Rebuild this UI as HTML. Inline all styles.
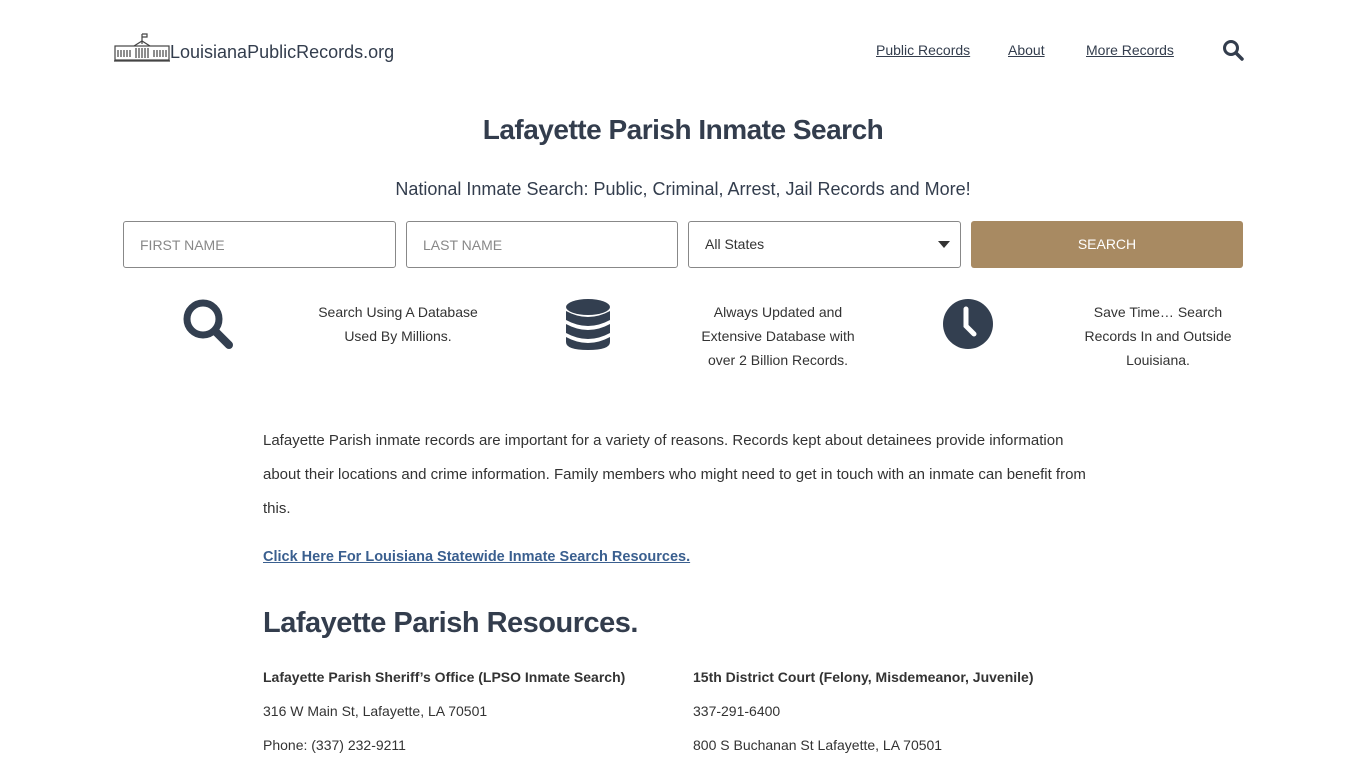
<!DOCTYPE html>
<html><head><meta charset="utf-8"><style>
body{margin:0;background:#fff;font-family:"Liberation Sans",sans-serif;color:#333;width:1366px;height:768px;overflow:hidden;position:relative}
.a{position:absolute}
.nav a{color:#333d4d;font-size:14px;text-decoration:underline}
input,.sel{position:absolute;top:221px;height:47px;border:1px solid #888;border-radius:3px;box-sizing:border-box;font-family:"Liberation Sans",sans-serif;font-size:14px;padding-left:16px;color:#888;line-height:45px}
.ft{font-size:14px;text-align:center;line-height:24px;color:#333}
p{margin:0}
</style></head><body>
<svg class="a" style="left:114px;top:32px" width="56" height="32" viewBox="0 0 56 32" fill="none" stroke="#444" stroke-width="1.2">
<line x1="28" y1="2" x2="28" y2="12"/><path d="M28 2h5v3h-5" />
<path d="M20 14 L28 9 L36 14"/>
<rect x="1" y="14" width="54" height="14"/>
<path d="M4 18v7M7 18v7M10 18v7M13 18v7M16 18v7M22 16v10M25 16v10M28 16v10M31 16v10M34 16v10M40 18v7M43 18v7M46 18v7M49 18v7M52 18v7"/>
<line x1="0" y1="29" x2="56" y2="29"/>
</svg>
<div class="a" style="left:170px;top:42px;font-size:18px;color:#333d4d">LouisianaPublicRecords.org</div>
<div class="a nav" style="left:876px;top:42px"><a>Public Records</a></div>
<div class="a nav" style="left:1008px;top:42px"><a>About</a></div>
<div class="a nav" style="left:1086px;top:42px"><a>More Records</a></div>
<svg class="a" style="left:1222px;top:39px" width="22" height="22" viewBox="0 0 22 22"><circle cx="9" cy="9" r="6.5" fill="none" stroke="#333d4d" stroke-width="3"/><line x1="14" y1="14" x2="20" y2="20" stroke="#333d4d" stroke-width="3.5" stroke-linecap="round"/></svg>
<div class="a" style="left:0;width:1366px;top:114px;text-align:center;font-size:28px;font-weight:bold;color:#333d4d;letter-spacing:-0.5px">Lafayette Parish Inmate Search</div>
<div class="a" style="left:0;width:1366px;top:179px;text-align:center;font-size:18px;color:#333d4d">National Inmate Search: Public, Criminal, Arrest, Jail Records and More!</div>
<input style="left:123px;width:273px" value="FIRST NAME">
<input style="left:406px;width:272px" value="LAST NAME">
<div class="sel" style="left:688px;width:273px;color:#333;padding-top:0">All States<span style="position:absolute;right:10px;top:19px;border:6px solid transparent;border-top:7px solid #333"></span></div>
<div class="a" style="left:971px;top:221px;width:272px;height:47px;background:#a88a62;border-radius:3px;color:#fff;font-size:14px;text-align:center;line-height:47px">SEARCH</div>
<svg class="a" style="left:182px;top:298px" width="52" height="52" viewBox="0 0 52 52"><circle cx="21" cy="21" r="16" fill="none" stroke="#333f50" stroke-width="7"/><line x1="33" y1="33" x2="47" y2="47" stroke="#333f50" stroke-width="8" stroke-linecap="round"/></svg>
<svg class="a" style="left:565px;top:299px" width="46" height="51" viewBox="0 0 46 51" fill="#333f50"><ellipse cx="23" cy="8" rx="22" ry="8"/><path d="M1 12q22 12 44 0v9q-22 12-44 0z"/><path d="M1 25q22 12 44 0v9q-22 12-44 0z"/><path d="M1 38q22 12 44 0v5q0 8-22 8t-22-8z"/></svg>
<svg class="a" style="left:943px;top:299px" width="50" height="50" viewBox="0 0 50 50"><circle cx="25" cy="25" r="25" fill="#333f50"/><path d="M23 10v17l8 8" stroke="#fff" stroke-width="5" fill="none" stroke-linecap="round"/></svg>
<div class="a ft" style="left:298px;width:200px;top:300px">Search Using A Database<br>Used By Millions.</div>
<div class="a ft" style="left:678px;width:200px;top:300px">Always Updated and<br>Extensive Database with<br>over 2 Billion Records.</div>
<div class="a ft" style="left:1058px;width:200px;top:300px">Save Time… Search<br>Records In and Outside<br>Louisiana.</div>
<div class="a" style="left:263px;top:424px;width:845px;font-size:15px;line-height:34px;color:#333">Lafayette Parish inmate records are important for a variety of reasons. Records kept about detainees provide information<br>about their locations and crime information. Family members who might need to get in touch with an inmate can benefit from<br>this.</div>
<div class="a" style="left:263px;top:549px;font-size:14.5px;font-weight:bold;color:#3a5f8f;text-decoration:underline">Click Here For Louisiana Statewide Inmate Search Resources.</div>
<div class="a" style="left:263px;top:607px;font-size:29px;font-weight:bold;letter-spacing:-0.5px;color:#333d4d">Lafayette Parish Resources.</div>
<div class="a" style="left:263px;top:660px;font-size:14px;line-height:34px;color:#333"><b>Lafayette Parish Sheriff’s Office (LPSO Inmate Search)</b><br>316 W Main St, Lafayette, LA 70501<br>Phone: (337) 232-9211</div>
<div class="a" style="left:693px;top:660px;font-size:14px;line-height:34px;color:#333"><b>15th District Court (Felony, Misdemeanor, Juvenile)</b><br>337-291-6400<br>800 S Buchanan St Lafayette, LA 70501</div>
</body></html>
